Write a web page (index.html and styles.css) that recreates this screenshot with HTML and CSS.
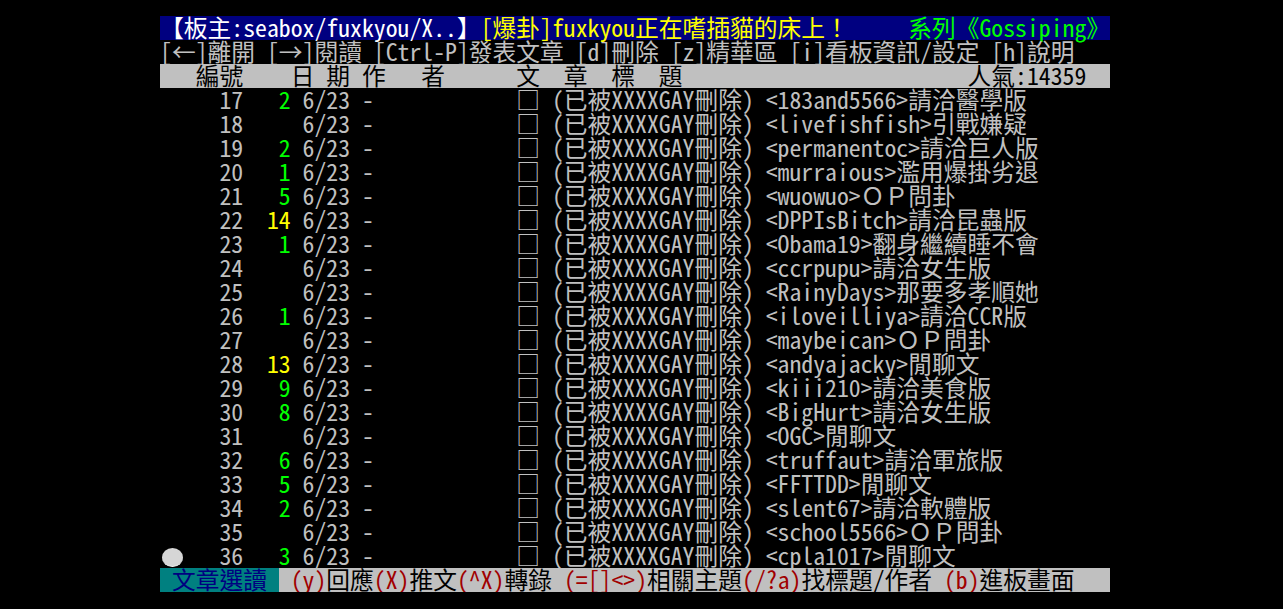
FILE: index.html
```html
<!DOCTYPE html>
<html lang="zh-Hant">
<head>
<meta charset="utf-8">
<title>PTT Gossiping</title>
<link rel="stylesheet" href="styles.css">
</head>
<body>
<main class="term">
<div class="row bar-blue"><span class="hi">【板主:seabox/fuxkyou/X..】</span><span class="yel">[爆卦]fuxkyou正在嗜插貓的床上！</span>     <span class="grn">系列《Gossiping》</span></div>
<div class="row">[←]離開 [→]閱讀 [Ctrl-P]發表文章 [d]刪除 [z]精華區 [i]看板資訊/設定 [h]說明</div>
<div class="row bar-gray">   編號    日 期 作   者      文  章  標  題                        人氣:14359  </div>
<div class="list">
<div class="row">     17   <span class="grn">2</span> 6/23 -            □ (已被XXXXGAY刪除) &lt;183and5566&gt;請洽醫學版</div>
<div class="row">     18     6/23 -            □ (已被XXXXGAY刪除) &lt;livefishfish&gt;引戰嫌疑</div>
<div class="row">     19   <span class="grn">2</span> 6/23 -            □ (已被XXXXGAY刪除) &lt;permanentoc&gt;請洽巨人版</div>
<div class="row">     20   <span class="grn">1</span> 6/23 -            □ (已被XXXXGAY刪除) &lt;murraious&gt;濫用爆掛劣退</div>
<div class="row">     21   <span class="grn">5</span> 6/23 -            □ (已被XXXXGAY刪除) &lt;wuowuo&gt;ＯＰ問卦</div>
<div class="row">     22  <span class="yel">14</span> 6/23 -            □ (已被XXXXGAY刪除) &lt;DPPIsBitch&gt;請洽昆蟲版</div>
<div class="row">     23   <span class="grn">1</span> 6/23 -            □ (已被XXXXGAY刪除) &lt;Obama19&gt;翻身繼續睡不會</div>
<div class="row">     24     6/23 -            □ (已被XXXXGAY刪除) &lt;ccrpupu&gt;請洽女生版</div>
<div class="row">     25     6/23 -            □ (已被XXXXGAY刪除) &lt;RainyDays&gt;那要多孝順她</div>
<div class="row">     26   <span class="grn">1</span> 6/23 -            □ (已被XXXXGAY刪除) &lt;iloveilliya&gt;請洽CCR版</div>
<div class="row">     27     6/23 -            □ (已被XXXXGAY刪除) &lt;maybeican&gt;ＯＰ問卦</div>
<div class="row">     28  <span class="yel">13</span> 6/23 -            □ (已被XXXXGAY刪除) &lt;andyajacky&gt;閒聊文</div>
<div class="row">     29   <span class="grn">9</span> 6/23 -            □ (已被XXXXGAY刪除) &lt;kiii210&gt;請洽美食版</div>
<div class="row">     30   <span class="grn">8</span> 6/23 -            □ (已被XXXXGAY刪除) &lt;BigHurt&gt;請洽女生版</div>
<div class="row">     31     6/23 -            □ (已被XXXXGAY刪除) &lt;OGC&gt;閒聊文</div>
<div class="row">     32   <span class="grn">6</span> 6/23 -            □ (已被XXXXGAY刪除) &lt;truffaut&gt;請洽軍旅版</div>
<div class="row">     33   <span class="grn">5</span> 6/23 -            □ (已被XXXXGAY刪除) &lt;FFTTDD&gt;閒聊文</div>
<div class="row">     34   <span class="grn">2</span> 6/23 -            □ (已被XXXXGAY刪除) &lt;slent67&gt;請洽軟體版</div>
<div class="row">     35     6/23 -            □ (已被XXXXGAY刪除) &lt;school5566&gt;ＯＰ問卦</div>
<div class="row">     36   <span class="grn">3</span> 6/23 -            □ (已被XXXXGAY刪除) &lt;cpla1017&gt;閒聊文</div>
</div>
<div class="row footer"><span class="mode"> 文章選讀 </span><span class="help"> <span class="key">(y)</span>回應<span class="key">(X)</span>推文<span class="key">(^X)</span>轉錄 <span class="key">(=[]&lt;&gt;)</span>相關主題<span class="key">(/?a)</span>找標題/作者 <span class="key">(b)</span>進板畫面   </span></div>
</main>
<div class="cursor-dot"></div>
</body>
</html>
```

FILE: styles.css
```css
html, body {
  margin: 0;
  padding: 0;
  background: #000;
}

.term {
  width: 950px;
  margin: 16px 0 0 160px;
  font-family: "Noto Sans Mono CJK TC", "Noto Sans CJK TC", monospace;
  font-size: 23.75px;
  color: #c0c0c0;
  display: flex;
  flex-direction: column;
}

.row {
  height: 24px;
  line-height: 22px;
  white-space: pre;
}

.bar-blue {
  background: #000080;
}

.bar-gray {
  background: #c0c0c0;
  color: #000;
}

.hi { color: #ffffff; }
.yel { color: #ffff00; }
.grn { color: #00ff00; }

.footer {
  display: flex;
  background: #c0c0c0;
}

.mode {
  background: #008080;
  color: #000080;
}

.help {
  color: #000;
  flex: 1;
}

.key {
  color: #a00000;
}

.cursor-dot {
  position: absolute;
  left: 162px;
  top: 548px;
  width: 21px;
  height: 18px;
  border-radius: 50%;
  background: #d6d6d6;
  border-bottom: 1px solid #f4f4f4;
}
```
